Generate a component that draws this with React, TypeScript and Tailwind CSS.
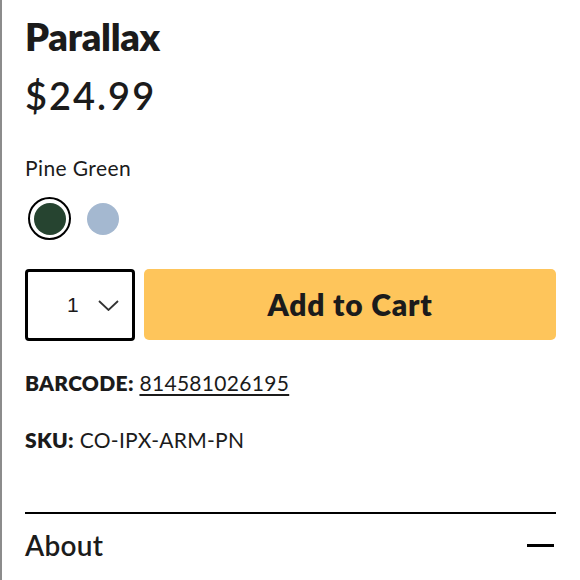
import { useState } from "react"

const SWATCHES = [
    { name: "Pine Green", color: "#264430" },
    { name: "Dusty Blue", color: "#a4b8d0" },
]

export default function App() {
    const [selected, setSelected] = useState(0)

    return (
        <div className="min-h-[580px] w-[580px] bg-white border-l-2 border-[#8c8c8c] pl-[23px] pr-6 pt-[14px] text-[#1b1b1b] font-['Lato',sans-serif]">
            <h1 className="text-[38px] font-extrabold leading-[44px] tracking-[-0.3px]">Parallax</h1>
            <p className="mt-[15px] text-[38px] font-semibold leading-[44px] tracking-[2px]">$24.99</p>

            <p className="mt-[38px] text-[21px] leading-[26px] tracking-[0.4px]">{SWATCHES[selected].name}</p>
            <div className="mt-[16px] flex items-center gap-[10px] pl-[3px]">
                {SWATCHES.map((s, i) => (
                    <button
                        key={s.name}
                        onClick={() => setSelected(i)}
                        className={
                            i === selected
                                ? "flex h-[43px] w-[43px] items-center justify-center rounded-full border-2 border-black"
                                : "flex h-[43px] w-[43px] items-center justify-center rounded-full border-2 border-transparent"
                        }
                    >
                        <span className="block h-[32px] w-[32px] rounded-full" style={{ backgroundColor: s.color }} />
                    </button>
                ))}
            </div>

            <div className="mt-[29px] flex gap-[9px]">
                <div className="flex h-[72px] w-[110px] items-center gap-[19px] rounded-[4px] border-[3px] border-black pl-[39px] font-['Liberation_Sans',sans-serif]">
                    <span className="text-[21px]">1</span>
                    <svg width="21" height="11" viewBox="0 0 21 11" fill="none" stroke="#333" strokeWidth="1.8">
                        <path d="M1 1l9.5 9 9.5-9" />
                    </svg>
                </div>
                <button className="flex h-[71px] flex-1 items-center justify-center rounded-[5px] bg-[#fec55b] text-[30px] font-extrabold tracking-[0.8px]">
                    Add to Cart
                </button>
            </div>

            <p className="mt-[29px] text-[21px] leading-[26px] tracking-[0.3px]">
                <span className="font-extrabold">BARCODE:</span>{" "}
                <span className="underline underline-offset-[3px] decoration-[1.5px]">814581026195</span>
            </p>
            <p className="mt-[31px] text-[21px] leading-[26px] tracking-[0.3px]">
                <span className="font-extrabold">SKU:</span> CO-IPX-ARM-PN
            </p>

            <div className="mt-[59px] border-t-2 border-black" />
            <div className="flex items-center justify-between pt-[14px]">
                <span className="text-[28px] font-semibold leading-[34px] tracking-[0.3px]">About</span>
                <span className="mr-[2px] block h-[3px] w-[27px] bg-black" />
            </div>
        </div>
    )
}
